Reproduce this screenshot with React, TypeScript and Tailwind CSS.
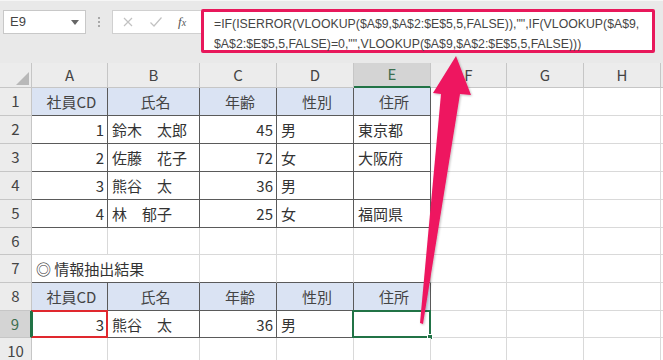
import React from "react";

const FONT = { fontFamily: '"Noto Sans CJK JP", "Noto Sans", sans-serif' };

type Row = { n: number; h: string; cells: string[]; kind: "head" | "data" | "empty" | "title" };

const rows: Row[] = [
  { n: 1, h: "h-[28px]", kind: "head", cells: ["社員CD", "氏名", "年齢", "性別", "住所"] },
  { n: 2, h: "h-[28px]", kind: "data", cells: ["1", "鈴木　太郎", "45", "男", "東京都"] },
  { n: 3, h: "h-[28px]", kind: "data", cells: ["2", "佐藤　花子", "72", "女", "大阪府"] },
  { n: 4, h: "h-[28px]", kind: "data", cells: ["3", "熊谷　太", "36", "男", ""] },
  { n: 5, h: "h-[28px]", kind: "data", cells: ["4", "林　郁子", "25", "女", "福岡県"] },
  { n: 6, h: "h-[27px]", kind: "empty", cells: [] },
  { n: 7, h: "h-[28px]", kind: "title", cells: ["◎ 情報抽出結果"] },
  { n: 8, h: "h-[28px]", kind: "head", cells: ["社員CD", "氏名", "年齢", "性別", "住所"] },
  { n: 9, h: "h-[27px]", kind: "data", cells: ["3", "熊谷　太", "36", "男", ""] },
  { n: 10, h: "h-[28px]", kind: "empty", cells: [] },
];

const letters = ["A", "B", "C", "D", "E", "F", "G", "H"];
const GRID = "grid grid-cols-[32px_76px_92px_77px_77px_77px_76px_77px_77px_1fr]";
const tableRows = [1, 2, 3, 4, 5, 8, 9];

function FormulaBar() {
  return (
    <div className="h-[63px] bg-[#e9e9e9] border-t border-[#f6f6f6] relative flex items-start pt-[9px]">
      <div className="ml-[3px] w-[83px] h-[24px] bg-white border border-[#c8c8c8] flex items-center justify-between px-[6px]">
        <span className="text-[13px] text-[#444]" style={{ fontFamily: '"Liberation Sans", sans-serif' }}>
          E9
        </span>
        <svg width="8" height="5" viewBox="0 0 8 5">
          <path d="M0 0 H8 L4 5 Z" fill="#666" />
        </svg>
      </div>
      <div className="w-[26px] h-[24px] flex items-center justify-center">
        <div className="flex flex-col gap-[2px]">
          <span className="w-[2px] h-[2px] bg-[#a8a8a8]" />
          <span className="w-[2px] h-[2px] bg-[#a8a8a8]" />
          <span className="w-[2px] h-[2px] bg-[#a8a8a8]" />
        </div>
      </div>
      <div className="w-[89px] h-[24px] bg-white border border-[#d0d0d0] border-r-0 flex items-center pl-[8px]">
        <svg width="12" height="12" viewBox="0 0 12 12" className="ml-[1px]">
          <path d="M2 2 L10 10 M10 2 L2 10" stroke="#c2c2c2" strokeWidth="1.2" />
        </svg>
        <svg width="14" height="12" viewBox="0 0 14 12" className="ml-[15px]">
          <path d="M1.5 6.5 L5 10 L12.5 1.5" stroke="#c2c2c2" strokeWidth="1.2" fill="none" />
        </svg>
        <span
          className="ml-[15px] text-[13px] italic text-[#555]"
          style={{ fontFamily: '"Liberation Serif", serif' }}
        >
          f<span className="text-[10px]">x</span>
        </span>
      </div>
      <div className="-mt-[1px] w-[454px] h-[44px] bg-white border-[3px] border-[#e8185b] rounded-[2px] pl-[10px] pt-[2px]">
        <div
          className="text-[12.3px] leading-[20px] text-[#454545] whitespace-nowrap"
          style={{ fontFamily: '"Liberation Sans", sans-serif' }}
        >
          <div>=IF(ISERROR(VLOOKUP($A$9,$A$2:$E$5,5,FALSE)),"",IF(VLOOKUP($A$9,</div>
          <div>$A$2:$E$5,5,FALSE)=0,"",VLOOKUP($A$9,$A$2:$E$5,5,FALSE)))</div>
        </div>
      </div>
    </div>
  );
}

function ColumnHeader() {
  return (
    <div className={`${GRID} h-[25px]`}>
      <div className="bg-[#ececec] border-r border-b border-[#c6c6c6] flex items-end justify-end p-[2px]">
        <svg width="13" height="13" viewBox="0 0 13 13">
          <path d="M13 0 V13 H0 Z" fill="#b8b8b8" />
        </svg>
      </div>
      {letters.map((l) => (
        <div
          key={l}
          className={
            l === "E"
              ? "bg-[#d4d4d4] border-r border-[#c6c6c6] border-b-2 border-b-[#217346] flex items-center justify-center text-[15px] text-[#3d6e4f]"
              : "bg-[#ececec] border-r border-b border-[#c6c6c6] flex items-center justify-center text-[15px] text-[#444]"
          }
        >
          {l}
        </div>
      ))}
      <div className="bg-[#ececec] border-b border-[#c6c6c6]" />
    </div>
  );
}

function Cell({ row, c, text }: { row: Row; c: number; text: string }) {
  const inTable = tableRows.includes(row.n) && c < 5;
  const nextIsTable = tableRows.includes(row.n + 1) && c < 5;
  const darkR = inTable;
  const darkB = inTable || nextIsTable;
  const isHead = row.kind === "head" && c < 5;
  const rightAlign = row.kind === "data" && (c === 0 || c === 2);
  const base = [
    "relative flex items-center text-[15px] text-[#333] whitespace-nowrap border-r border-b",
    darkR ? "border-r-[#5a5a5a]" : "border-r-[#d9d9d9]",
    darkB ? "border-b-[#5a5a5a]" : "border-b-[#d9d9d9]",
    isHead ? "bg-[#dae3f3] justify-center text-[#444]" : "bg-white",
    rightAlign ? "justify-end pr-[3px]" : "pl-[4px]",
  ].join(" ");
  return (
    <div className={base}>
      <span className="pt-[2px]">{text}</span>
      {row.n === 9 && c === 0 && (
        <div className="absolute -left-px -top-px -right-px -bottom-px border-2 border-[#e0282e] border-l-[#217346]" />
      )}
      {row.n === 9 && c === 4 && (
        <div className="absolute -left-[2px] -top-px -right-px -bottom-px border-2 border-[#217346]">
          <div className="absolute -right-[4px] -bottom-[4px] w-[6px] h-[6px] bg-[#217346] border border-white" />
        </div>
      )}
    </div>
  );
}

function SheetRow({ row }: { row: Row }) {
  const selected = row.n === 9;
  return (
    <div className={`${GRID} ${row.h}`}>
      <div
        className={
          selected
            ? "bg-[#d4d4d4] border-b border-[#c6c6c6] border-r-2 border-r-[#217346] flex items-center justify-center text-[15px] text-[#3d6e4f]"
            : "bg-[#ececec] border-r border-b border-[#c6c6c6] flex items-center justify-center text-[15px] text-[#444]"
        }
      >
        {row.n}
      </div>
      {row.kind === "title" ? (
        <>
          <div className="col-span-2 bg-white border-r border-r-[#d9d9d9] border-b border-b-[#5a5a5a] flex items-center pl-[4px] text-[15px] text-[#333] whitespace-nowrap">
            <span className="pt-[2px]">{row.cells[0]}</span>
          </div>
          {[2, 3, 4].map((c) => (
            <div key={c} className="bg-white border-r border-r-[#d9d9d9] border-b border-b-[#5a5a5a]" />
          ))}
        </>
      ) : (
        [0, 1, 2, 3, 4].map((c) => <Cell key={c} row={row} c={c} text={row.cells[c] ?? ""} />)
      )}
      {[5, 6, 7].map((c) => (
        <div key={c} className="bg-white border-r border-b border-[#d9d9d9]" />
      ))}
      <div className="bg-white border-b border-[#d9d9d9]" />
    </div>
  );
}

export default function App() {
  return (
    <div className="relative w-[663px] h-[360px] overflow-hidden bg-white" style={FONT}>
      <FormulaBar />
      <ColumnHeader />
      {rows.map((r) => (
        <SheetRow key={r.n} row={r} />
      ))}

      {/* pink callout arrow */}
      <svg
        className="absolute left-0 top-0 pointer-events-none"
        width="663"
        height="360"
        viewBox="0 0 663 360"
      >
        <defs>
          <filter id="sh" x="-20%" y="-20%" width="140%" height="140%">
            <feDropShadow dx="1" dy="1" stdDeviation="1.2" floodColor="#000" floodOpacity="0.25" />
          </filter>
        </defs>
        <g filter="url(#sh)" fill="#ee1660">
          <path d="M456 56 L471 95 L460 94 L423 324 L420 323 L441 94 L433 93 Z" />
        </g>
      </svg>
    </div>
  );
}
